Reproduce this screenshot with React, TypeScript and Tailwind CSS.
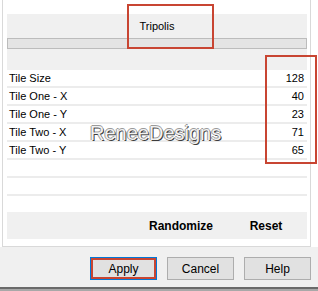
import React from 'react';

interface Param {
  label: string;
  value: number;
}

const params: Param[] = [
  { label: 'Tile Size', value: 128 },
  { label: 'Tile One - X', value: 40 },
  { label: 'Tile One - Y', value: 23 },
  { label: 'Tile Two - X', value: 71 },
  { label: 'Tile Two - Y', value: 65 },
];

const font = 'font-["Liberation_Sans",Arial,sans-serif]';

const App: React.FC = () => {
  return (
    <div className={`relative w-[318px] h-[291px] overflow-hidden bg-[#f0f0f0] text-[11px] text-black ${font}`}>
      {/* filter window */}
      <div className="bg-white pl-[2px]">
        <div className="w-[309px] h-[247px] border-l border-r border-b border-[#d9d9d9] pl-[4px] pt-[14px] flex flex-col">
          {/* preset header */}
          <div className="w-[300px] h-[56px] bg-[#f0f0f0] flex flex-col">
            <div className="h-[24px] flex items-center justify-center">Tripolis</div>
            <div className="h-[11px] border border-[#bcbcbc] bg-[#e4e4e4]" />
          </div>

          {/* sliders list */}
          <div className="w-[300px]">
            {params.map((p) => (
              <div
                key={p.label}
                className="h-[18px] border-b-2 border-[#ececec] flex items-center justify-between pl-[2px] pr-[3px]"
              >
                <span>{p.label}</span>
                <span>{p.value}</span>
              </div>
            ))}
            <div className="h-[18px] border-b-2 border-[#ececec]" />
            <div className="h-[18px] border-b-2 border-[#ececec]" />
          </div>

          <div className="h-[16px]" />

          {/* randomize bar */}
          <div className="w-[300px] h-[27px] bg-[#f0f0f0] flex items-center justify-end pr-[11px] font-bold text-[12px]">
            <span className="w-[80px] text-center">Randomize</span>
            <span className="w-[15px]" />
            <span className="w-[60px] text-center">Reset</span>
          </div>
        </div>
      </div>

      {/* dialog buttons */}
      <div className="h-[40px] flex items-start justify-end gap-[10px] pt-[10px] pr-[7px]">
        <button className="relative w-[67px] h-[23px] bg-[#e1e1e1] border border-[#0078d7] text-[12px]">
          Apply
          <span className="absolute inset-0 border-2 border-[#c84532]" />
        </button>
        <button className="w-[67px] h-[23px] bg-[#e1e1e1] border border-[#adadad] text-[12px]">Cancel</button>
        <button className="w-[67px] h-[23px] bg-[#e1e1e1] border border-[#adadad] text-[12px]">Help</button>
      </div>
      <div className="h-[2px] bg-[#6a6a6a]" />
      <div className="h-[2px] bg-[#a8a8a8]" />

      {/* annotations */}
      <div className="absolute left-[127px] top-[4px] w-[87px] h-[45px] border-2 border-[#c84532]" />
      <div className="absolute left-[265px] top-[55px] w-[52px] h-[109px] border-2 border-[#c84532]" />

      {/* watermark */}
      <div className="absolute left-[90px] top-[121px] text-[20px] leading-[24px] text-[#f2f2f2] [text-shadow:1px_1px_0_#3c3c3c,-1px_0_0_#9a9a9a,0_-1px_0_#9a9a9a]">
        ReneeDesigns
      </div>
    </div>
  );
};

export default App;
